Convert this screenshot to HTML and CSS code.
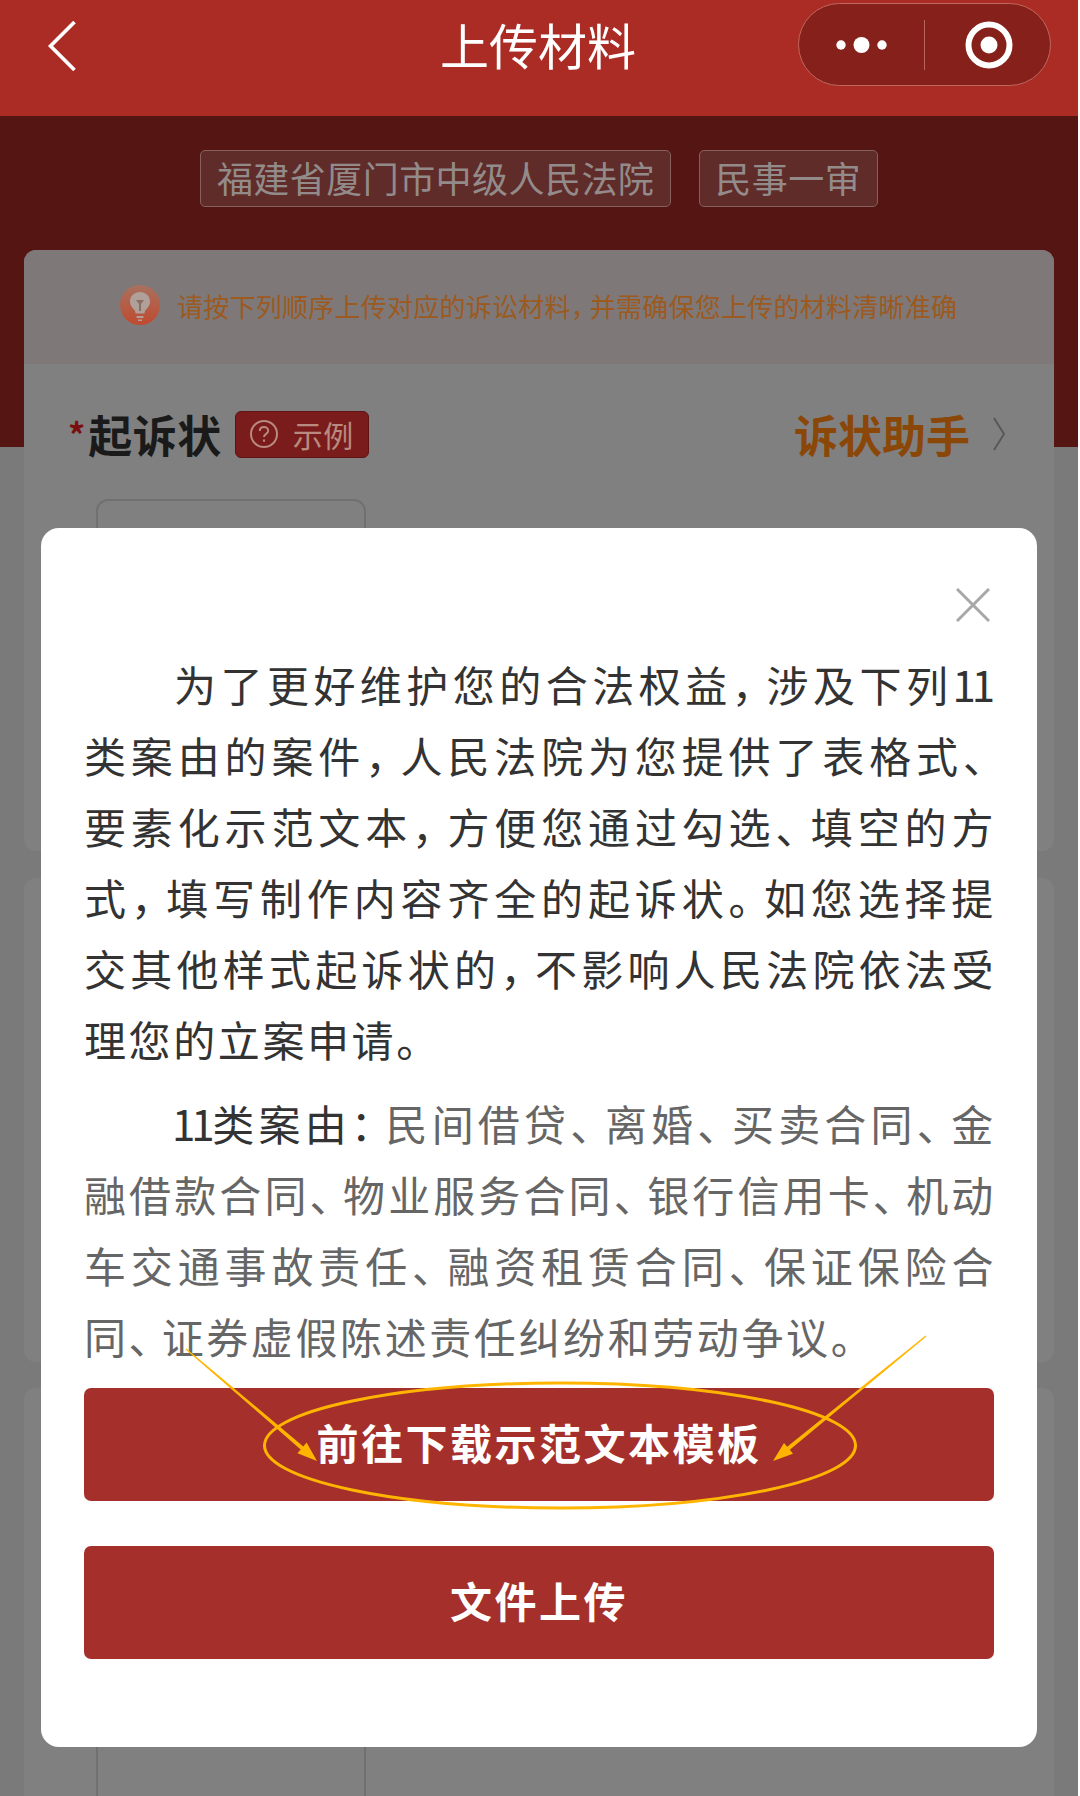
FILE: index.html
```html
<!DOCTYPE html>
<html lang="zh-CN">
<head>
<meta charset="utf-8">
<title>上传材料</title>
<link rel="stylesheet" href="styles.css">
</head>
<body>
<div class="page">
  <header class="nav">
    <svg class="back" viewBox="0 0 28 48" aria-hidden="true"><path d="M26 1 3 24l23 23" /></svg>
    <h1 class="nav-title">上传材料</h1>
    <div class="capsule">
      <svg class="cap-dots" viewBox="0 0 60 20" aria-hidden="true"><circle cx="9" cy="10" r="4.7"/><circle cx="29.5" cy="10" r="8"/><circle cx="50" cy="10" r="4.7"/></svg>
      <span class="cap-sep"></span>
      <svg class="cap-target" viewBox="0 0 48 48" aria-hidden="true"><circle class="ring" cx="24" cy="24" r="20.5"/><circle cx="24" cy="24" r="8.5"/></svg>
    </div>
  </header>

  <section class="hero">
    <span class="chip">福建省厦门市中级人民法院</span>
    <span class="chip">民事一审</span>
  </section>

  <main class="cards">
    <section class="card card-first">
      <div class="tip">
        <svg class="tip-icon" viewBox="0 0 40 40" aria-hidden="true">
          <defs><linearGradient id="tipg" x1="0" y1="0" x2="0" y2="1"><stop offset="0" stop-color="#a8715f"/><stop offset="1" stop-color="#c04a30"/></linearGradient></defs>
          <circle cx="20" cy="20" r="20" fill="url(#tipg)"/>
          <path class="bulb" d="M20 7c-6 0-10 4.300-10 9.500 0 3.500 2 6 4 8 1 1.200 1.500 2.500 1.500 4h9c0-1.500.5-2.800 1.500-4 2-2 4-4.500 4-8C30 11.300 26 7 20 7zM16.500 31h7v2h-7zM18 34.500h4v1.500h-4z"/>
          <path class="bulb-core" d="M16 15h8l-3 4v7h-2v-7z"/>
        </svg>
        <p class="tip-text">请按下列顺序上传对应的诉讼材料<span class="t2">，</span>并需确保您上传的材料清晰准确</p>
      </div>
      <div class="head-row">
        <span class="star">*</span>
        <h2 class="item-title">起诉状</h2>
        <span class="badge">
          <svg class="badge-icon" viewBox="0 0 30 30" aria-hidden="true"><circle cx="15" cy="15" r="13"/><path d="M10.800 12c0-2.500 1.900-4 4.200-4s4.200 1.500 4.200 3.700c0 3.300-4.200 3-4.200 6.300"/><path d="M15 20.500v2.300"/></svg>
          示例
        </span>
        <span class="assist">诉状助手</span>
        <svg class="assist-chev" viewBox="0 0 12 34" aria-hidden="true"><path d="M1 1l10 16L1 33"/></svg>
      </div>
      <div class="upload"></div>
    </section>
    <section class="card card-second"></section>
    <section class="card card-third"><div class="upload upload-third"></div></section>
  </main>

  <section class="modal">
    <svg class="close" viewBox="0 0 34 34" aria-hidden="true"><path d="M1 1l32 32M33 1 1 33"/></svg>
    <p class="para para-main">为了更好维护您的合法权益<span class="t">，</span>涉及下列<span class="n n-end">11</span>类案由的案件<span class="t">，</span>人民法院为您提供了表格式<span class="t">、</span>要素化示范文本<span class="t">，</span>方便您通过勾选<span class="t">、</span>填空的方式<span class="t">，</span>填写制作内容齐全的起诉状<span class="t">。</span>如您选择提交其他样式起诉状的<span class="t">，</span>不影响人民法院依法受理您的立案申请<span class="t">。</span></p>
    <p class="para para-list"><span class="dark"><span class="n n-start">11</span>类案由<span class="t">：</span></span>民间借贷<span class="t">、</span>离婚<span class="t">、</span>买卖合同<span class="t">、</span>金融借款合同<span class="t">、</span>物业服务合同<span class="t">、</span>银行信用卡<span class="t">、</span>机动车交通事故责任<span class="t">、</span>融资租赁合同<span class="t">、</span>保证保险合同<span class="t">、</span>证券虚假陈述责任纠纷和劳动争议<span class="t">。</span></p>
    <button class="btn btn-first" type="button">前往下载示范文本模板</button>
    <button class="btn btn-second" type="button">文件上传</button>
  </section>

  <svg class="marks" viewBox="0 0 1078 1796" aria-hidden="true">
    <ellipse cx="560" cy="1445.500" rx="295.500" ry="62.500"/>
    <polygon points="186.400,1348.500 303.300,1446.400 306.600,1442.600 317,1461 297.400,1453.200 300.700,1449.400 185.600,1349.500"/>
    <polygon points="925.600,1335.500 787.200,1446.800 784,1442.900 773,1461 793,1453.700 789.800,1449.800 926.400,1336.500"/>
  </svg>
</div>
</body>
</html>
```
FILE: styles.css
```css
* { box-sizing: border-box; }
html, body { margin: 0; background: #fff; }
body { font-family: "Noto Sans CJK SC", "Noto Sans", sans-serif; }
.page { position: relative; width: 1078px; height: 1796px; overflow: hidden; background: #7a7a7a; }
p, h1, h2 { margin: 0; font-weight: inherit; }

/* nav */
.nav { position: relative; height: 116px; background: #aa2c24; display: flex; align-items: flex-start; justify-content: space-between; padding: 3px 27px 0 47px; }
.back { width: 30px; height: 50px; margin-top: 18px; fill: none; stroke: #fff; stroke-width: 3.500; }
.nav-title { position: absolute; left: 0; right: 2px; top: 12px; text-align: center; font-size: 49px; line-height: 64px; color: #fff; font-weight: 400; }
.capsule { width: 253px; height: 83px; border-radius: 42px; background: #85201a; border: 1px solid #c0675f; display: flex; align-items: center; }
.cap-dots { width: 60px; height: 20px; margin-left: 33px; fill: #fff; }
.cap-sep { width: 1px; height: 50px; margin-left: 32px; background: #b8655e; }
.cap-target { width: 48px; height: 48px; margin-left: 40px; fill: #fff; }
.cap-target .ring { fill: none; stroke: #fff; stroke-width: 6; }

/* hero */
.hero { height: 331px; background: #551512; display: flex; justify-content: center; align-items: flex-start; gap: 28px; padding-top: 34px; }
.chip { height: 57px; line-height: 52px; padding: 0 15.500px; border: 1.500px solid #86605e; border-radius: 5px; background: #5f2c2a; color: #938b8a; font-size: 36px; letter-spacing: .45px; }

/* cards behind */
.cards { margin: -197px 24px 0; display: flex; flex-direction: column; }
.card { background: #808080; border-radius: 12px; width: 1030px; }
.card-first { height: 601px; }
.card-second { height: 484px; margin-top: 27px; }
.card-third { height: 500px; margin-top: 26px; padding: 60px 0 0 72px; }
.tip { height: 114px; background: #7e7879; border-radius: 12px 12px 0 0; display: flex; align-items: center; padding: 0 0 4px 96px; gap: 17px; }
.tip-icon { width: 40px; height: 40px; flex: none; }
.bulb { fill: #b0a09a; }
.bulb-core { fill: #8a6e66; }
.tip-text { font-size: 26px; letter-spacing: .25px; color: #9c5a1e; white-space: nowrap; }
.t2 { font-feature-settings: "halt"; letter-spacing: 6px; }
.head-row { position: relative; display: flex; align-items: center; margin-top: 44px; height: 52px; padding-left: 44px; }
.star { color: #7a0f0f; font-size: 34px; font-weight: 700; line-height: 30px; margin-right: 3px; }
.item-title { color: #1a1a1a; font-size: 44px; font-weight: 700; line-height: 52px; letter-spacing: .5px; }
.badge { display: flex; align-items: center; gap: 14px; width: 134px; height: 47px; margin-left: 13px; padding-left: 13px; background: #791c1b; border: 1px solid #5f1312; border-radius: 6px; color: #b98a80; font-size: 30px; letter-spacing: .5px; }
.badge-icon { width: 30px; height: 30px; flex: none; fill: none; stroke: #b98a80; stroke-width: 2; }
.assist { margin-left: auto; color: #8a4708; font-size: 44px; font-weight: 700; }
.assist-chev { width: 12px; height: 34px; margin: 0 49px 0 23px; fill: none; stroke: #585858; stroke-width: 2; }
.upload { width: 270px; height: 500px; margin: 39px 0 0 72px; border: 2px solid #707070; border-radius: 12px; }
.upload-third { margin: 0; }

/* modal */
.modal { position: absolute; left: 41px; top: 528px; width: 996px; height: 1219px; background: #fff; border-radius: 18px; padding: 60px 43px 0; }
.close { display: block; width: 34px; height: 34px; margin: 0 4px 26px auto; fill: none; stroke: #a8a8a8; stroke-width: 3; }
.para { font-size: 42px; line-height: 71px; letter-spacing: 2.600px; text-align: justify; text-indent: 90px; width: 912px; }
.para-main { color: #333; }
.para-list { margin-top: 13px; color: #666; }
.dark { color: #333; }
.t { font-feature-settings: "halt"; letter-spacing: 12px; }
.n { letter-spacing: -4px; }
.n-end { padding-right: 5px; }
.n-start { margin-left: -2px; }
.btn { display: block; width: 910px; border: 0; border-radius: 7px; background: #a5302b; color: #fff; font: 700 42px/1 "Noto Sans CJK SC", sans-serif; letter-spacing: 2.500px; padding: 0 0 5px; }
.btn-first { height: 113px; margin-top: 17px; }
.btn-second { height: 113px; margin-top: 45px; }

/* hand-drawn marks over the modal */
.marks { position: absolute; left: 0; top: 0; width: 1078px; height: 1796px; pointer-events: none; }
.marks ellipse { fill: none; stroke: #ffb500; stroke-width: 3; }
.marks polygon { fill: #ffb500; }
```
